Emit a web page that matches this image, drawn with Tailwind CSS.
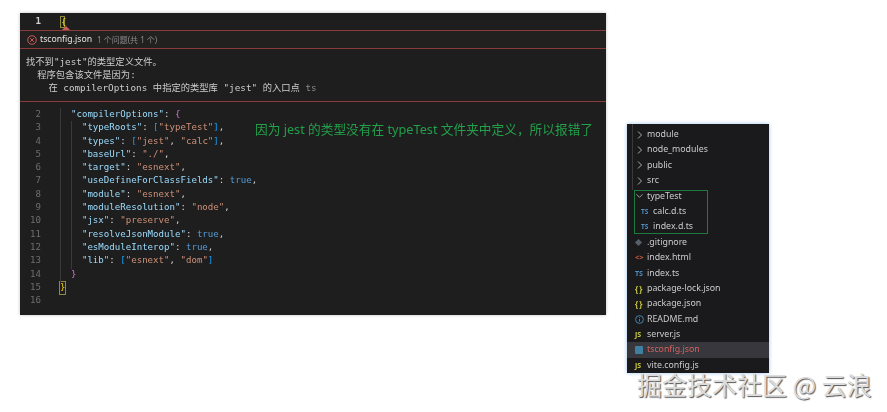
<!DOCTYPE html>
<html lang="zh-CN">
<head>
    <meta charset="UTF-8">
    <title>tsconfig typeTest</title>
    <script src="https://cdn.jsdelivr.net/npm/@tailwindcss/browser@4"></script>
</head>
<body class="bg-white">
<div class="relative w-[887px] h-[412px] overflow-hidden bg-white flex items-start">

    <!-- editor -->
    <div class="relative mt-[13px] ml-[20px] w-[586px] h-[302px] bg-[#1e1e1e] shadow-[0_0_3px_rgba(0,0,0,0.25)] text-[#d4d4d4] font-['DejaVu_Sans_Mono','Noto_Sans_CJK_SC',monospace] text-[9.1px] blur-[0.3px]">
        <div class="relative h-[18px] flex items-center border-b border-[#8a3b3b]">
            <span class="w-[21px] text-right text-[#d0d0d0] font-bold">1</span>
            <span class="ml-[19px] w-[5px] h-[12px] border border-[#8c8c3a] text-[#ffd700] leading-[10px]">{</span>
            <div class="absolute left-[42px] bottom-0 w-0 h-0 border-x-[4px] border-x-transparent border-b-[4px] border-b-[#c95a5a]"></div>
        </div>
        <div class="h-[18px] flex items-center border-b border-[#8a3b3b] pl-[7px] font-['Noto_Sans','Noto_Sans_CJK_SC',sans-serif] bg-[#232020]">
            <svg class="w-[10px] h-[10px]" viewBox="0 0 10 10" fill="none" stroke="#d9605f" stroke-width="0.9"><circle cx="5" cy="5" r="4.3"/><path d="M3.2 3.2l3.6 3.6M6.8 3.2l-3.6 3.6"/></svg>
            <span class="ml-[3px] text-[8.7px] text-[#e4e4e4]">tsconfig.json</span>
            <span class="ml-[5px] text-[8px] text-[#8a8a8a]">1 个问题(共 1 个)</span>
        </div>
        <div class="h-[53px] pt-[6px] pl-[6px] border-b border-[#8a3b3b] text-[9.3px] leading-[13px] text-[#cccccc] [&>div]:whitespace-pre">
            <div>找不到"jest"的类型定义文件。</div>
            <div>  程序包含该文件是因为:</div>
            <div>    在 compilerOptions 中指定的类型库 "jest" 的入口点 <span class="text-[#8a8a8a]">ts</span></div>
        </div>
        <div class="pt-[6px] leading-[13.3px] [&>div]:whitespace-pre">
            <div class="flex"><span class="w-[21px] text-right text-[#6e6e6e]">2</span><span class="ml-[19px]">  <span class="text-[#9cdcfe]">"compilerOptions"</span>: <span class="text-[#da70d6]">{</span></span></div>
            <div class="flex"><span class="w-[21px] text-right text-[#6e6e6e]">3</span><span class="ml-[19px]">    <span class="text-[#9cdcfe]">"typeRoots"</span>: <span class="text-[#179fff]">[</span><span class="text-[#ce9178]">"typeTest"</span><span class="text-[#179fff]">]</span>,</span></div>
            <div class="flex"><span class="w-[21px] text-right text-[#6e6e6e]">4</span><span class="ml-[19px]">    <span class="text-[#9cdcfe]">"types"</span>: <span class="text-[#179fff]">[</span><span class="text-[#ce9178]">"jest"</span>, <span class="text-[#ce9178]">"calc"</span><span class="text-[#179fff]">]</span>,</span></div>
            <div class="flex"><span class="w-[21px] text-right text-[#6e6e6e]">5</span><span class="ml-[19px]">    <span class="text-[#9cdcfe]">"baseUrl"</span>: <span class="text-[#ce9178]">"./"</span>,</span></div>
            <div class="flex"><span class="w-[21px] text-right text-[#6e6e6e]">6</span><span class="ml-[19px]">    <span class="text-[#9cdcfe]">"target"</span>: <span class="text-[#ce9178]">"esnext"</span>,</span></div>
            <div class="flex"><span class="w-[21px] text-right text-[#6e6e6e]">7</span><span class="ml-[19px]">    <span class="text-[#9cdcfe]">"useDefineForClassFields"</span>: <span class="text-[#569cd6]">true</span>,</span></div>
            <div class="flex"><span class="w-[21px] text-right text-[#6e6e6e]">8</span><span class="ml-[19px]">    <span class="text-[#9cdcfe]">"module"</span>: <span class="text-[#ce9178]">"esnext"</span>,</span></div>
            <div class="flex"><span class="w-[21px] text-right text-[#6e6e6e]">9</span><span class="ml-[19px]">    <span class="text-[#9cdcfe]">"moduleResolution"</span>: <span class="text-[#ce9178]">"node"</span>,</span></div>
            <div class="flex"><span class="w-[21px] text-right text-[#6e6e6e]">10</span><span class="ml-[19px]">    <span class="text-[#9cdcfe]">"jsx"</span>: <span class="text-[#ce9178]">"preserve"</span>,</span></div>
            <div class="flex"><span class="w-[21px] text-right text-[#6e6e6e]">11</span><span class="ml-[19px]">    <span class="text-[#9cdcfe]">"resolveJsonModule"</span>: <span class="text-[#569cd6]">true</span>,</span></div>
            <div class="flex"><span class="w-[21px] text-right text-[#6e6e6e]">12</span><span class="ml-[19px]">    <span class="text-[#9cdcfe]">"esModuleInterop"</span>: <span class="text-[#569cd6]">true</span>,</span></div>
            <div class="flex"><span class="w-[21px] text-right text-[#6e6e6e]">13</span><span class="ml-[19px]">    <span class="text-[#9cdcfe]">"lib"</span>: <span class="text-[#179fff]">[</span><span class="text-[#ce9178]">"esnext"</span>, <span class="text-[#ce9178]">"dom"</span><span class="text-[#179fff]">]</span></span></div>
            <div class="flex"><span class="w-[21px] text-right text-[#6e6e6e]">14</span><span class="ml-[19px]">  <span class="text-[#da70d6]">}</span></span></div>
            <div class="flex"><span class="w-[21px] text-right text-[#6e6e6e]">15</span><span class="ml-[19px] outline outline-[#8c8c3a] text-[#ffd700] h-[12px] leading-[11px] mt-px">}</span></div>
            <div class="flex"><span class="w-[21px] text-right text-[#6e6e6e]">16</span></div>
        </div>
        <!-- indent guides -->
        <div class="absolute left-[40px] top-[95px] w-px h-[174px] bg-[#3a3a3a]"></div>
        <div class="absolute left-[51px] top-[108px] w-px h-[148px] bg-[#3a3a3a]"></div>
        <!-- annotation -->
        <div class="absolute left-[235px] top-[107px] text-[12.7px] leading-[18px] text-[#22a04a] font-['Noto_Sans','Noto_Sans_CJK_SC',sans-serif] whitespace-nowrap">因为 jest 的类型没有在 typeTest 文件夹中定义，所以报错了</div>
    </div>

    <!-- explorer -->
    <div class="relative mt-[124px] ml-[21px] w-[142px] h-[249px] pt-[3px] bg-[#1a1a1c] shadow-[0_0_4px_#9cc4ee] text-[#cccccc] text-[8.8px] font-['Noto_Sans',sans-serif] leading-[15.4px] blur-[0.3px]">
        <div class="h-[15.4px] flex items-center"><svg class="ml-[10px] mr-[4px] w-[6px] h-[8px]" viewBox="0 0 6 8" fill="none" stroke="#bbb" stroke-width="0.9"><path d="M1 0.5l3.5 3.5-3.5 3.5"/></svg>module</div>
        <div class="h-[15.4px] flex items-center"><svg class="ml-[10px] mr-[4px] w-[6px] h-[8px]" viewBox="0 0 6 8" fill="none" stroke="#bbb" stroke-width="0.9"><path d="M1 0.5l3.5 3.5-3.5 3.5"/></svg>node_modules</div>
        <div class="h-[15.4px] flex items-center"><svg class="ml-[10px] mr-[4px] w-[6px] h-[8px]" viewBox="0 0 6 8" fill="none" stroke="#bbb" stroke-width="0.9"><path d="M1 0.5l3.5 3.5-3.5 3.5"/></svg>public</div>
        <div class="h-[15.4px] flex items-center"><svg class="ml-[10px] mr-[4px] w-[6px] h-[8px]" viewBox="0 0 6 8" fill="none" stroke="#bbb" stroke-width="0.9"><path d="M1 0.5l3.5 3.5-3.5 3.5"/></svg>src</div>
        <div class="h-[15.4px] flex items-center"><svg class="ml-[9px] mr-[4px] w-[7px] h-[6px]" viewBox="0 0 8 6" fill="none" stroke="#bbb" stroke-width="0.9"><path d="M0.5 1l3.5 3.5 3.5-3.5"/></svg>typeTest</div>
        <div class="h-[15.4px] flex items-center pl-[14px]"><span class="w-[12px] text-[6.5px] font-bold text-[#4c8fc4]">TS</span>calc.d.ts</div>
        <div class="h-[15.4px] flex items-center pl-[14px]"><span class="w-[12px] text-[6.5px] font-bold text-[#4c8fc4]">TS</span>index.d.ts</div>
        <div class="h-[15.4px] flex items-center pl-[8px]"><span class="w-[12px] flex"><span class="ml-px w-[5px] h-[5px] rotate-45 bg-[#55606a]"></span></span>.gitignore</div>
        <div class="h-[15.4px] flex items-center pl-[8px]"><span class="w-[12px] text-[7.5px] font-bold text-[#d9603f]">&lt;&gt;</span>index.html</div>
        <div class="h-[15.4px] flex items-center pl-[8px]"><span class="w-[12px] text-[7px] font-bold text-[#4c8fc4]">TS</span>index.ts</div>
        <div class="h-[15.4px] flex items-center pl-[8px]"><span class="w-[12px] text-[8px] font-bold tracking-[1px] text-[#cbcb41]">{}</span>package-lock.json</div>
        <div class="h-[15.4px] flex items-center pl-[8px]"><span class="w-[12px] text-[8px] font-bold tracking-[1px] text-[#cbcb41]">{}</span>package.json</div>
        <div class="h-[15.4px] flex items-center pl-[8px]"><span class="w-[12px]"><svg class="w-[9px] h-[9px]" viewBox="0 0 9 9" fill="none" stroke="#4c9ac9" stroke-width="0.8"><circle cx="4.5" cy="4.5" r="3.9"/><path d="M4.5 4v2.7M4.5 2.2v0.9"/></svg></span>README.md</div>
        <div class="h-[15.4px] flex items-center pl-[8px]"><span class="w-[12px] text-[7px] font-bold text-[#cbcb41]">JS</span>server.js</div>
        <div class="h-[15.4px] flex items-center pl-[8px] bg-[#37373d] text-[#d4605f]"><span class="w-[12px]"><span class="block w-[8px] h-[8px] rounded-[1px] bg-[#3f7f9f]"></span></span>tsconfig.json</div>
        <div class="h-[15.4px] flex items-center pl-[8px]"><span class="w-[12px] text-[7px] font-bold text-[#cbcb41]">JS</span>vite.config.js</div>
        <div class="absolute left-[5px] top-0 w-px h-[66px] bg-[#3a3a3a]"></div>
        <div class="absolute left-[7px] top-[66px] w-[74px] h-[44px] border-[1.5px] border-[#1e7a3c]"></div>
    </div>

    <!-- watermark -->
    <div class="absolute left-[637px] top-[369px] text-[25px] leading-[30px] text-[#dcdcdc] font-['Noto_Sans_CJK_SC','Noto_Sans',sans-serif] whitespace-nowrap [text-shadow:1px_1px_1px_#555]">掘金技术社区 @ 云浪</div>
</div>
</body>
</html>
